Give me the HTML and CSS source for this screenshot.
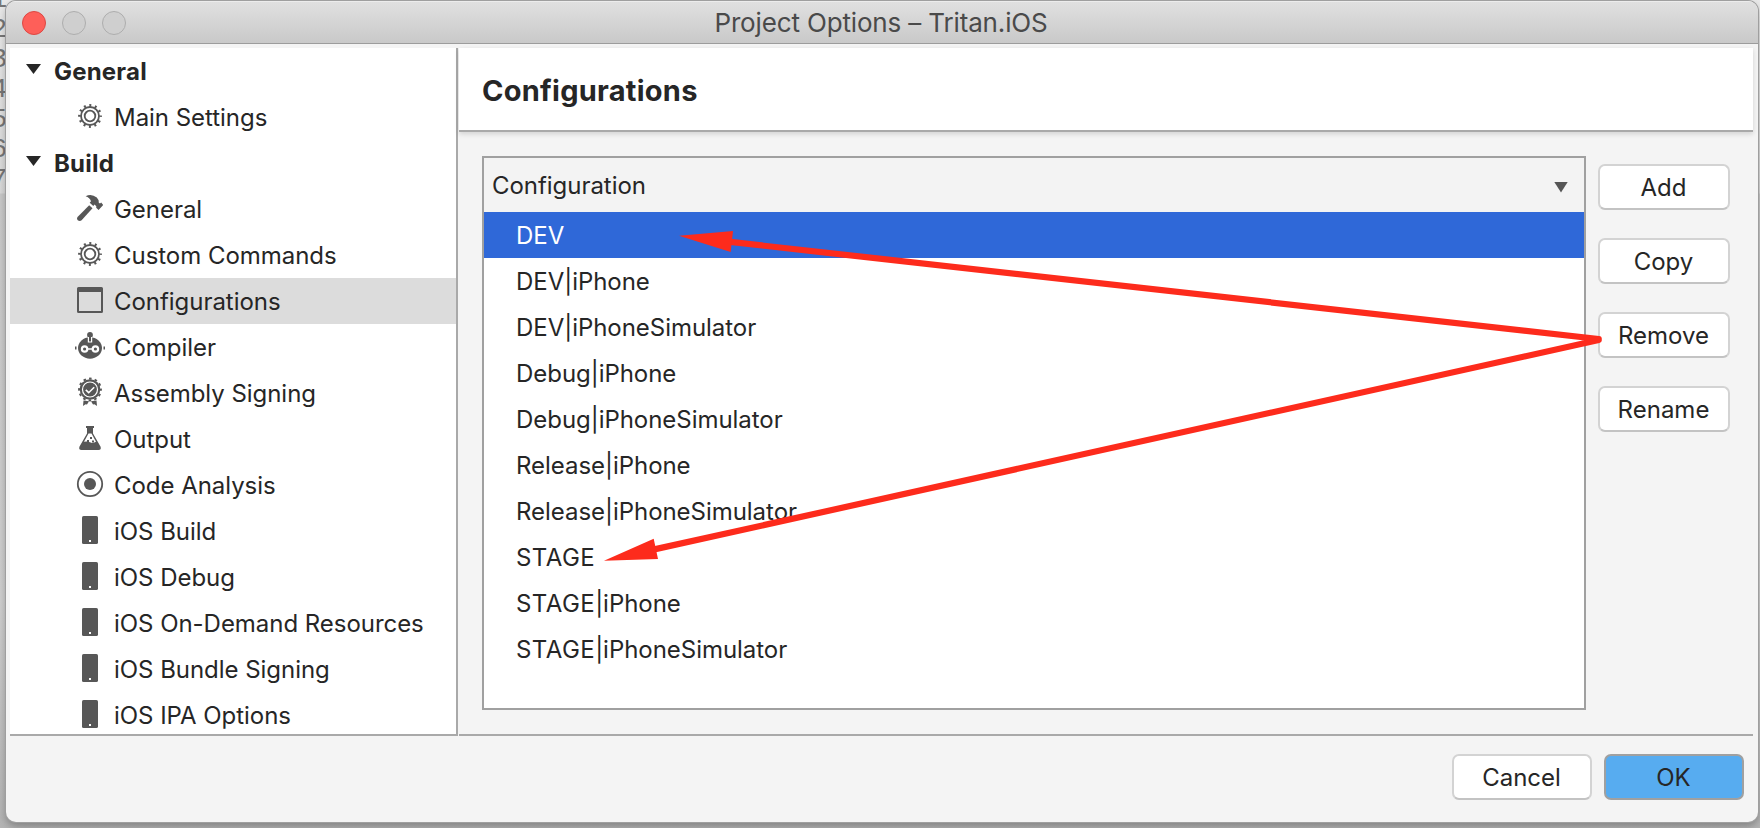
FILE: index.html
```html
<!DOCTYPE html>
<html lang="en">
<head>
<meta charset="utf-8">
<title>Project Options – Tritan.iOS</title>
<link rel="stylesheet" href="styles.css">
</head>
<body>
<svg class="defs" aria-hidden="true">
  <defs>
    <symbol id="gear" viewBox="0 0 30 30">
      <g fill="none" stroke="#575757">
        <circle cx="15" cy="15" r="10.6" stroke-width="2.6" stroke-dasharray="2 3.55" stroke-dashoffset="1"/>
        <circle cx="15" cy="15" r="9" stroke-width="1.8"/>
        <circle cx="15" cy="15" r="5.3" stroke-width="1.8"/>
      </g>
    </symbol>
    <symbol id="hammer" viewBox="0 0 30 30">
      <path d="M3 23.500 14.200 12.200l3.300 3L6.600 27.200Q5 28.600 3 27.500 1 25.700 3 23.500Z" fill="#575757"/>
      <path d="M10.600 3.200Q16.500 0 21.800 4.600L23.600 7.200 23.800 9.800 25 10.400 26.200 9.500 28.200 12 23.600 17 21.200 14.800 21.300 13.200 19.500 11.600 18.300 13 14.700 9.800 16 8.200Q14.800 4.500 10.600 3.200Z" fill="#575757"/>
    </symbol>
    <symbol id="window" viewBox="0 0 30 30">
      <path fill="#575757" fill-rule="evenodd" d="M3.500 2h23a1.500 1.500 0 0 1 1.500 1.500v23a1.500 1.500 0 0 1-1.500 1.500h-23a1.500 1.500 0 0 1-1.500-1.500v-23a1.500 1.500 0 0 1 1.500-1.500ZM4 7v19h22V7Z"/>
    </symbol>
    <symbol id="robot" viewBox="0 0 30 30">
      <circle cx="15" cy="4" r="2.900" fill="#575757"/>
      <ellipse cx="15" cy="17" rx="12" ry="10.700" fill="#575757"/>
      <path d="M13.400 6v5h3.200V6" fill="none" stroke="#fff" stroke-width="1.200"/>
      <path d="M14 5h2v5h-2z" fill="#575757"/>
      <circle cx="9.600" cy="18" r="3.800" fill="#fff"/><circle cx="20.400" cy="18" r="3.800" fill="#fff"/>
      <path d="M9 18h12" stroke="#fff" stroke-width="1.500"/>
      <circle cx="9.600" cy="18" r="1.600" fill="#575757"/><circle cx="20.400" cy="18" r="1.600" fill="#575757"/>
      <path d="M0 15.500h1.500v3H0zM28.500 15.500H30v3h-1.500z" fill="#575757"/>
    </symbol>
    <symbol id="badge" viewBox="0 0 30 30">
      <circle cx="15" cy="12.500" r="10.300" fill="#575757"/>
      <circle cx="15" cy="12.500" r="10.900" fill="none" stroke="#575757" stroke-width="2" stroke-dasharray="2.600 3.107" stroke-dashoffset="1.300"/>
      <circle cx="15" cy="12.500" r="7.500" fill="none" stroke="#fff" stroke-width="1.200"/>
      <path d="m10.800 12.900 2.900 2.800 5.500-5.400" fill="none" stroke="#fff" stroke-width="1.600"/>
      <path d="m8.500 23.600 5.500.600-2 3.300-1.500-.300L8 29ZM21.500 23.600l-5.500.600 2 3.300 1.500-.300L22 29Z" fill="#575757"/>
    </symbol>
    <symbol id="flask" viewBox="0 0 30 30">
      <path d="M11 3h8v2h-1v5.500l7.600 13.200Q26.500 27 23.500 27h-17Q3.500 27 4.400 23.700L12 10.500V5h-1Z" fill="#575757"/>
      <path d="M13.500 10.500h3L21 18.800Q18 20.800 15 19.300T9 18.800Z" fill="#fff"/>
      <path d="M15 14h2v2h-2zM12 17h2v2h-2zM17 17.500h2v2h-2z" fill="#575757"/>
    </symbol>
    <symbol id="target" viewBox="0 0 30 30">
      <circle cx="15" cy="15" r="12.200" fill="none" stroke="#575757" stroke-width="1.800"/>
      <circle cx="15" cy="15" r="6" fill="#575757"/>
    </symbol>
    <symbol id="phone" viewBox="0 0 30 30">
      <rect x="7" y="1" width="16" height="28" rx="1.600" fill="#575757"/>
      <rect x="14" y="25" width="2" height="2" fill="#fff"/>
    </symbol>
  </defs>
</svg>

<div class="backdrop-lines" aria-hidden="true">
  <span>1</span><span>2</span><span>3</span><span>4</span><span>5</span><span>6</span><span>7</span>
</div>

<div class="window">
  <header class="titlebar">
    <div class="lights"><i class="light close"></i><i class="light"></i><i class="light"></i></div>
    <h1 class="window-title">Project Options – Tritan.iOS</h1>
  </header>

  <div class="panes">
    <nav class="sidebar">
      <div class="group"><i class="disclosure"></i><span>General</span></div>
      <div class="item"><svg class="icon"><use href="#gear"/></svg><span>Main Settings</span></div>
      <div class="group"><i class="disclosure"></i><span>Build</span></div>
      <div class="item"><svg class="icon"><use href="#hammer"/></svg><span>General</span></div>
      <div class="item"><svg class="icon"><use href="#gear"/></svg><span>Custom Commands</span></div>
      <div class="item selected"><svg class="icon"><use href="#window"/></svg><span>Configurations</span></div>
      <div class="item"><svg class="icon"><use href="#robot"/></svg><span>Compiler</span></div>
      <div class="item"><svg class="icon"><use href="#badge"/></svg><span>Assembly Signing</span></div>
      <div class="item"><svg class="icon"><use href="#flask"/></svg><span>Output</span></div>
      <div class="item"><svg class="icon"><use href="#target"/></svg><span>Code Analysis</span></div>
      <div class="item"><svg class="icon"><use href="#phone"/></svg><span>iOS Build</span></div>
      <div class="item"><svg class="icon"><use href="#phone"/></svg><span>iOS Debug</span></div>
      <div class="item"><svg class="icon"><use href="#phone"/></svg><span>iOS On-Demand Resources</span></div>
      <div class="item"><svg class="icon"><use href="#phone"/></svg><span>iOS Bundle Signing</span></div>
      <div class="item"><svg class="icon"><use href="#phone"/></svg><span>iOS IPA Options</span></div>
    </nav>

    <main class="detail">
      <h2 class="detail-title"><span>Configurations</span></h2>
      <div class="detail-body">
        <div class="table">
          <div class="table-head"><span>Configuration</span><i class="sort"></i></div>
          <div class="row active"><span>DEV</span></div>
          <div class="row"><span>DEV|iPhone</span></div>
          <div class="row"><span>DEV|iPhoneSimulator</span></div>
          <div class="row"><span>Debug|iPhone</span></div>
          <div class="row"><span>Debug|iPhoneSimulator</span></div>
          <div class="row"><span>Release|iPhone</span></div>
          <div class="row"><span>Release|iPhoneSimulator</span></div>
          <div class="row"><span><b class="caps">STAGE</b></span></div>
          <div class="row"><span><b class="caps">STAGE</b>|iPhone</span></div>
          <div class="row"><span><b class="caps">STAGE</b>|iPhoneSimulator</span></div>
        </div>
        <div class="actions">
          <button class="button">Add</button>
          <button class="button">Copy</button>
          <button class="button">Remove</button>
          <button class="button">Rename</button>
        </div>
      </div>
    </main>
  </div>

  <footer class="footer">
    <button class="button">Cancel</button>
    <button class="button primary">OK</button>
  </footer>
</div>

<svg class="annotation" viewBox="0 0 1760 828" aria-hidden="true">
  <g stroke="#fd2b1c" stroke-width="6.200" stroke-linecap="round">
    <path d="M728 241.700 1598.700 339M652 549.900 1598.700 340" fill="none"/>
  </g>
  <path d="M679 235.700 733 231 730.700 252ZM604 560.700 653.700 538.700 658 559Z" fill="#fd2b1c"/>
</svg>
</body>
</html>
```

FILE: styles.css
```css
* { box-sizing: border-box; }

body {
  margin: 0;
  width: 1760px;
  height: 828px;
  overflow: hidden;
  position: relative;
  padding: 1px 2px 0 6px;
  background: linear-gradient(#e9e9e9 0, #d9d9d9 193px, #c9c9c9 194px, #cfcfcf 600px, #b4b4b4 828px);
  font-family: Inter, "Liberation Sans", sans-serif;
  font-size: 24px;
  letter-spacing: -.04px;
  color: #262626;
}

.defs { position: absolute; width: 0; height: 0; }

.backdrop-lines {
  position: absolute;
  left: -9px;
  top: -15px;
  display: flex;
  flex-direction: column;
  font: 27px/30px "Liberation Mono", monospace;
  color: #777;
}

.window {
  position: relative;
  height: 821px;
  display: flex;
  flex-direction: column;
  background: #f4f4f4;
  border-radius: 10px;
  box-shadow: 0 0 0 1px #9f9f9f, 0 4px 8px rgba(0, 0, 0, .3);
  overflow: hidden;
}

.titlebar {
  flex: none;
  height: 43px;
  display: grid;
  grid-template-columns: 1fr auto 1fr;
  align-items: center;
  background: linear-gradient(#e0e0e0, #c9c9c9);
  border-bottom: 1px solid #9c9c9c;
  border-top: 1px solid #ececec;
}

.lights { display: flex; gap: 16px; padding-left: 16px; }
.light {
  width: 24px;
  height: 24px;
  border-radius: 50%;
  border: 1px solid #adadad;
  background: #cfcfcf;
}
.light.close { background: #fe5f59; border-color: #dc4843; }

.window-title {
  margin: 0;
  padding-right: 2px;
  font-size: 26px;
  font-weight: 400;
  line-height: 36px;
  letter-spacing: -.15px;
  color: #4a4a4a;
}

.panes {
  flex: none;
  height: 692px;
  display: flex;
  gap: 1px;
  padding: 4px 5px 0 4px;
}

.sidebar {
  flex: none;
  width: 448px;
  height: 688px;
  overflow: hidden;
  background: #fff;
  border-right: 2px solid #a9a9a9;
  border-bottom: 2px solid #a9a9a9;
}

.group, .item { height: 46px; display: flex; align-items: center; white-space: nowrap; }
.group { font-weight: 700; padding-left: 16px; gap: 13px; letter-spacing: .2px; }
.item { padding-left: 65px; gap: 9px; }
.item.selected { background: #dcdcdc; }
.icon { width: 30px; height: 30px; flex: none; position: relative; top: -1px; }

.disclosure, .sort { flex: none; clip-path: polygon(0 0, 100% 0, 50% 100%); }
.disclosure { width: 15px; height: 10px; margin-bottom: 4px; background: #262626; }
.sort { width: 14px; height: 11px; margin-top: 4px; background: #555; }

.detail { flex: 1; display: flex; flex-direction: column; border-bottom: 2px solid #a9a9a9; }
.detail-title {
  flex: none;
  margin: 0;
  height: 84px;
  padding: 2px 0 0 23px;
  display: flex;
  align-items: center;
  background: #fff;
  border-bottom: 2px solid #a9a9a9;
  box-shadow: 0 2px 5px rgba(0, 0, 0, .14);
  font-size: 29px;
  font-weight: 700;
  letter-spacing: .25px;
}

.detail-body { flex: 1; display: flex; gap: 12px; padding: 24px 23px; }
.table { width: 1104px; flex: none; background: #fff; border: 2px solid #a0a0a0; }
.table-head {
  height: 54px;
  padding: 0 16px 0 8px;
  display: flex;
  align-items: center;
  justify-content: space-between;
  background: #f3f3f3;
}
.row { height: 46px; padding-left: 32px; display: flex; align-items: center; }
.row.active { background: #2f68d8; color: #fff; }
.caps { font-weight: 400; letter-spacing: .45px; }

.actions { flex: none; width: 132px; display: flex; flex-direction: column; gap: 28px; padding-top: 8px; }

.button {
  height: 46px;
  padding: 0 1px 0 0;
  border: 2px solid #d3d3d3;
  border-bottom-color: #c3c3c3;
  border-radius: 7px;
  background: #fff;
  font: inherit;
  color: inherit;
}
.button.primary { background: #57acf0; border-color: #a0a0a0; }

.footer { display: flex; justify-content: flex-end; gap: 12px; padding: 18px 14px 0 0; }
.footer .button { width: 140px; }

.annotation { position: absolute; left: 0; top: 0; width: 1760px; height: 828px; }
```
